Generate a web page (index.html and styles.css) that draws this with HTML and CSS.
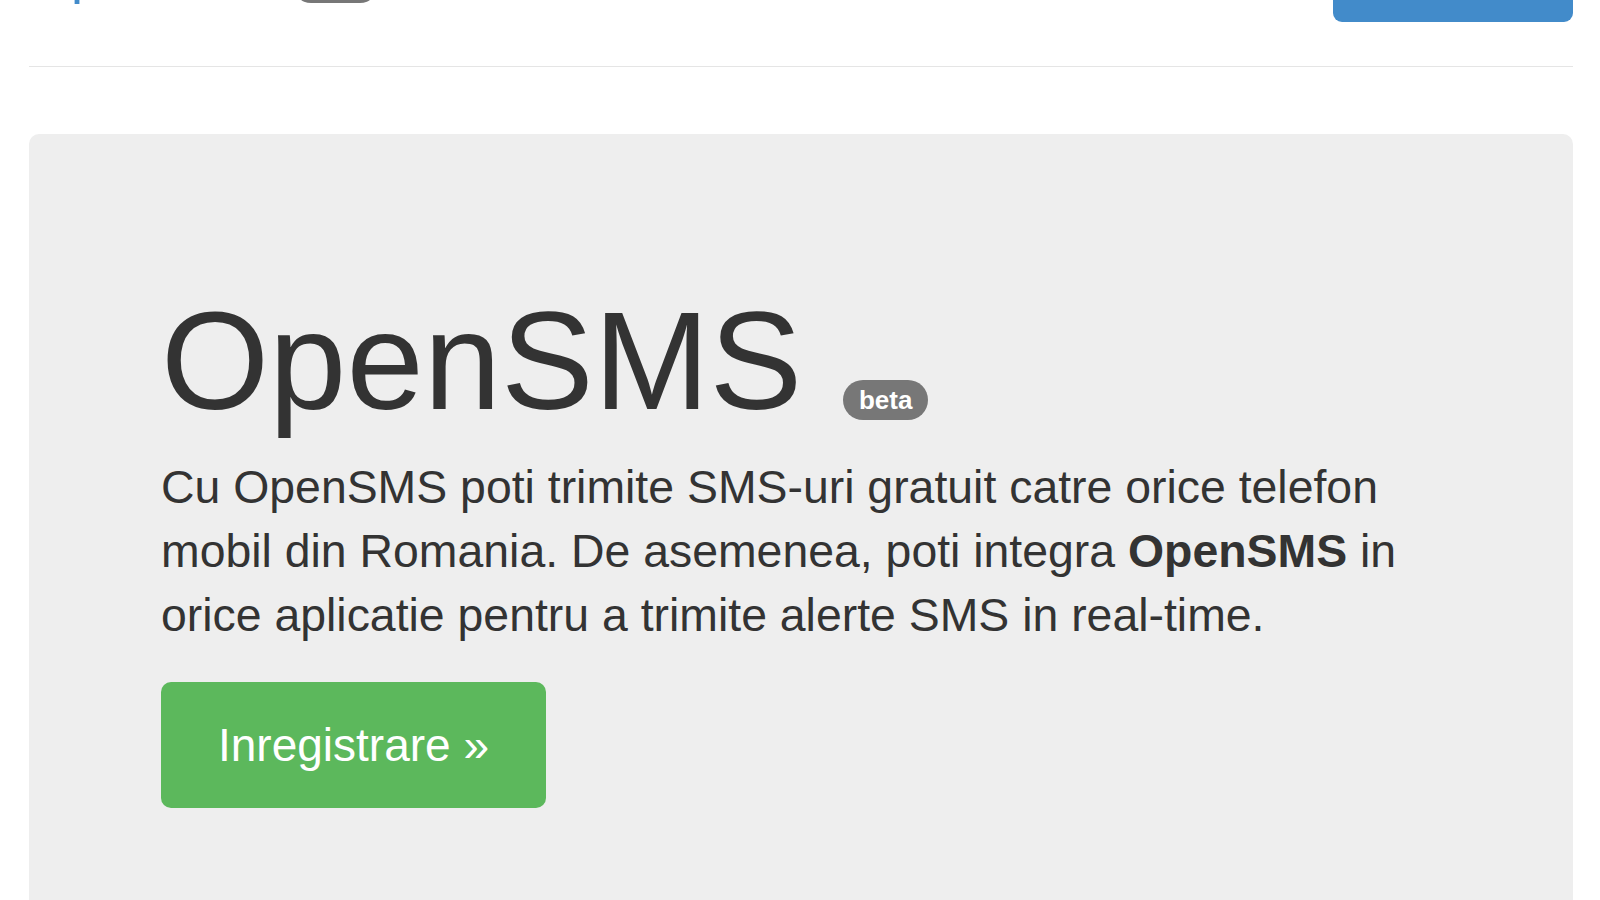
FILE: index.html
```html
<!DOCTYPE html>
<html lang="ro">
<head>
  <meta charset="UTF-8" />
  <meta name="viewport" content="width=device-width, initial-scale=1.0" />
  <title>OpenSMS</title>
  <link rel="stylesheet" href="styles.css">
</head>
<body>
  <div class="container">
    <header class="header">
      <a class="brand" href="#">OpenSMS <span class="badge badge-sm">beta</span></a>
      <ul class="nav">
        <li><a href="#">Acasa</a></li>
        <li><a href="#">Despre</a></li>
        <li><a href="#">Contact</a></li>
      </ul>
      <a class="btn btn-primary" href="#">Autentificare</a>
    </header>

    <div class="jumbotron">
      <h1>OpenSMS <span class="badge">beta</span></h1>
      <p>Cu OpenSMS poti trimite SMS-uri gratuit catre orice telefon mobil din Romania. De asemenea, poti integra <strong>OpenSMS</strong> in orice aplicatie pentru a trimite alerte SMS in real-time.</p>
      <p class="actions"><a class="btn btn-success" href="#">Inregistrare &raquo;</a></p>
    </div>
  </div>
</body>
</html>
```

FILE: styles.css
```css
html, body {
  overflow: hidden;
}
body {
  margin: 0;
  font-family: "Liberation Sans", Arial, sans-serif;
  background-color: #fff;
  color: #333;
}
a {
  text-decoration: none;
}
.container {
  width: 1544px;
  padding-left: 29px;
}
.header {
  display: flex;
  align-items: flex-end;
  height: 111px;
  margin-top: -45px;
  border-bottom: 1px solid #e5e5e5;
}
.brand {
  font-size: 54px;
  line-height: 1.1;
  color: #428bca;
  margin-bottom: 62px;
}
.nav {
  list-style: none;
  display: flex;
  gap: 40px;
  margin: 0 auto 68px;
  padding: 0 0 0 200px;
}
.nav a {
  font-size: 36px;
  color: #ddd;
}
.btn {
  display: inline-block;
  color: #fff;
  text-align: center;
}
.btn-primary {
  width: 240px;
  height: 90px;
  line-height: 90px;
  font-size: 36px;
  background-color: #428bca;
  border-radius: 9px;
  margin-bottom: 44px;
}
.badge {
  display: inline-block;
  font-size: 26px;
  font-weight: bold;
  line-height: 1;
  padding: 7px 16px;
  color: #fff;
  background-color: #777;
  border-radius: 21px;
  vertical-align: baseline;
}
.badge-sm {
  font-size: 24px;
  padding: 6px 18px;
}
.jumbotron {
  margin-top: 67px;
  padding: 151px 132px;
  background-color: #eee;
  border-radius: 10px;
}
.jumbotron h1 {
  margin: 0 0 17px;
  font-size: 139px;
  font-weight: normal;
  line-height: 1.1;
  color: #333;
}
.jumbotron h1 .badge {
  margin-left: 2px;
}
.jumbotron p {
  margin: 0;
  font-size: 46.4px;
  line-height: 64px;
}
.jumbotron .actions {
  margin-top: 35px;
}
.btn-success {
  padding: 31px 57px;
  font-size: 46px;
  line-height: 64px;
  background-color: #5cb85c;
  border-radius: 10px;
}
```
